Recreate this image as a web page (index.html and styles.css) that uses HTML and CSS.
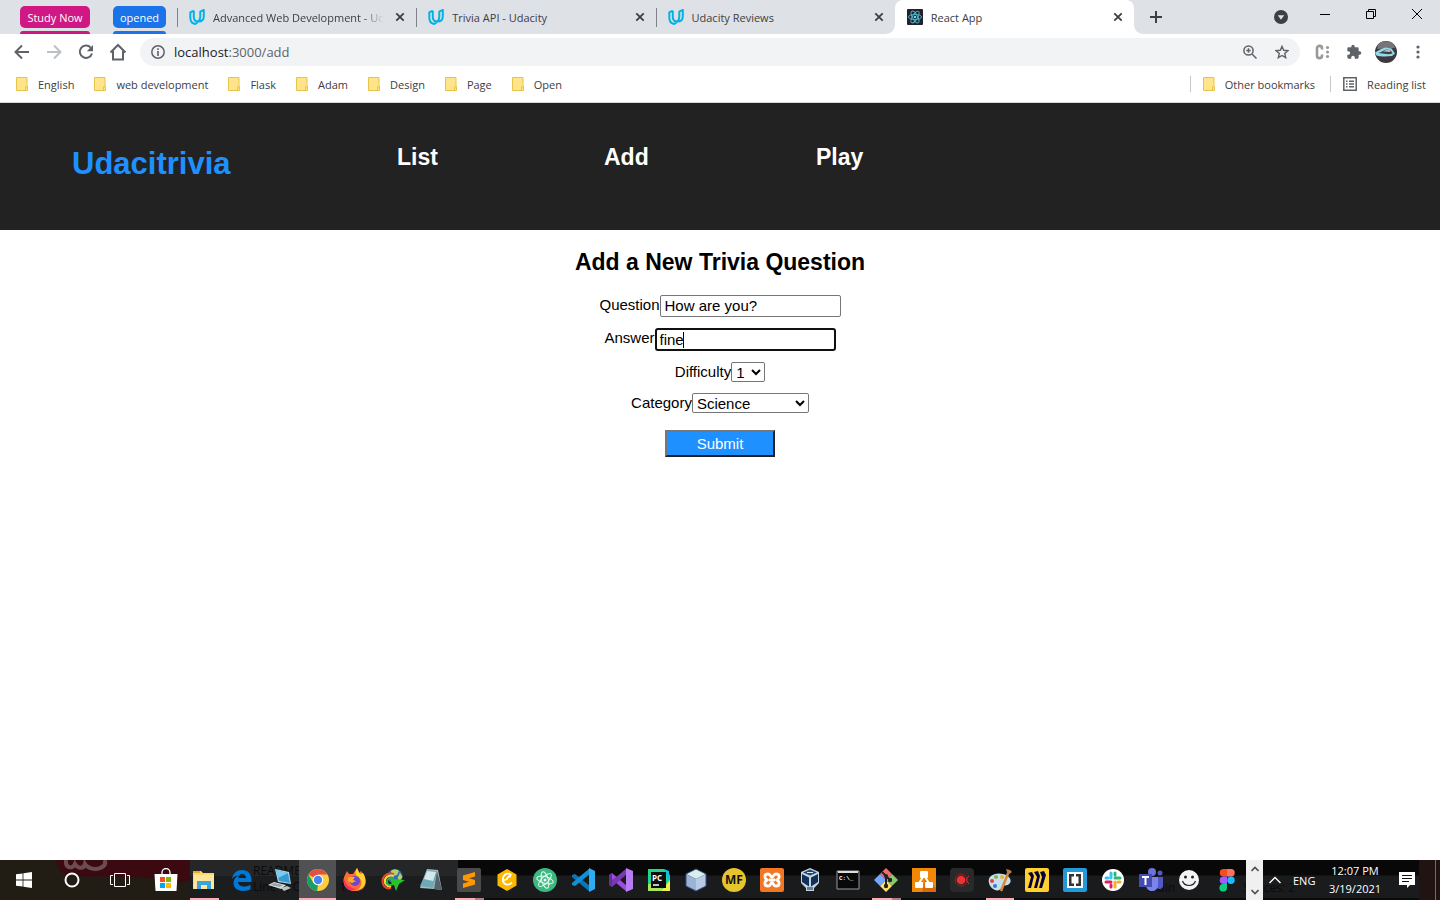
FILE: index.html
```html
<!DOCTYPE html>
<html lang="en">
<head>
<meta charset="utf-8">
<title>React App</title>
<link rel="stylesheet" href="styles.css">
</head>
<body>
<svg class="defs" aria-hidden="true">
  <symbol id="udacity" viewBox="0 0 16 16"><path d="M4.8 1.7 1.3 3.4v5.1c0 3.300 1.900 5.900 4.600 6.500 1.600-.4 2.600-1.400 3.200-2.600M4.800 1.700v6.300c0 2.800 1.800 4.600 4.600 4.600 3.500 0 5.400-2.200 5.400-5.300V.9l-3.500 1.700v5.200c0 1.900-.5 3.300-1.900 4.700" fill="none" stroke="#02b3e4" stroke-width="2" stroke-linejoin="round"/></symbol>
  <symbol id="close" viewBox="0 0 10 10"><path d="M1.300 1.300l7.400 7.400M8.700 1.300L1.300 8.700" stroke="#3c4043" stroke-width="1.800"/></symbol>
  <symbol id="folder" viewBox="0 0 12 14"><path d="M.5.5h10.500v9h.5v4H.5z" fill="#ffe48c" stroke="#e8c44a"/><path d="M9.500 13V9.800H11" fill="none" stroke="#e8c44a"/></symbol>
</svg>

<header class="browser">
  <div class="tabstrip">
    <div class="groups">
      <button class="chip chip-pink">Study Now</button>
      <button class="chip chip-blue">opened</button>
    </div>
    <nav class="tabs" aria-label="Tabs">
      <div class="tab"><svg class="fav"><use href="#udacity"/></svg><span class="tab-title fade">Advanced Web Development - Ud</span><button class="x" aria-label="Close tab"><svg><use href="#close"/></svg></button></div>
      <div class="tab"><svg class="fav"><use href="#udacity"/></svg><span class="tab-title">Trivia API - Udacity</span><button class="x" aria-label="Close tab"><svg><use href="#close"/></svg></button></div>
      <div class="tab"><svg class="fav"><use href="#udacity"/></svg><span class="tab-title">Udacity Reviews</span><button class="x" aria-label="Close tab"><svg><use href="#close"/></svg></button></div>
      <div class="tab active"><svg class="fav" viewBox="0 0 16 16"><rect width="16" height="16" rx="1" fill="#20232a"/><g fill="none" stroke="#50b8d2" stroke-width=".9"><ellipse cx="8" cy="8" rx="6.600" ry="2.600"/><ellipse cx="8" cy="8" rx="6.600" ry="2.600" transform="rotate(60 8 8)"/><ellipse cx="8" cy="8" rx="6.600" ry="2.600" transform="rotate(120 8 8)"/></g><circle cx="8" cy="8" r="1.300" fill="#61dafb"/></svg><span class="tab-title">React App</span><button class="x" aria-label="Close tab"><svg><use href="#close"/></svg></button></div>
    </nav>
    <button class="newtab" aria-label="New tab"><svg width="12" height="12"><path d="M6 0v12M0 6h12" stroke="#3c4043" stroke-width="2"/></svg></button>
    <div class="window-controls">
      <button class="search-tabs" aria-label="Search tabs"><svg width="14" height="14"><circle cx="7" cy="7" r="7" fill="#3c4043"/><path d="M3.800 5.200h6.400L7 9.800z" fill="#dee1e6"/></svg></button>
      <button aria-label="Minimize"><svg width="10" height="10"><path d="M0 5.500h10" stroke="#000"/></svg></button>
      <button aria-label="Restore"><svg width="10" height="10" fill="none" stroke="#000"><path d="M.5 2.500h7v7h-7zM2.500 2.500v-2h7v7h-2"/></svg></button>
      <button aria-label="Close"><svg width="10" height="10"><path d="M0 0l10 10M10 0L0 10" stroke="#000"/></svg></button>
    </div>
  </div>

  <div class="toolbar">
    <button class="tool" aria-label="Back"><svg width="16" height="16" fill="none" stroke="#5f6368" stroke-width="2"><path d="M15 8H2M8 1.500L1.500 8 8 14.500"/></svg></button>
    <button class="tool" aria-label="Forward"><svg width="16" height="16" fill="none" stroke="#bdc0c3" stroke-width="2"><path d="M1 8h13M8 1.500L14.500 8 8 14.500"/></svg></button>
    <button class="tool" aria-label="Reload"><svg width="16" height="16"><path d="M12.700 3.600A6.200 6.200 0 1 0 14 9.500" fill="none" stroke="#5f6368" stroke-width="2"/><path d="M15 1v6.200H8.800z" fill="#5f6368"/></svg></button>
    <button class="tool" aria-label="Home"><svg width="18" height="18" fill="none" stroke="#5f6368" stroke-width="2"><path d="M1.500 9.500L9 2l7.500 7.500M4 8v8.500h10V8"/></svg></button>
    <div class="omnibox">
      <svg width="14" height="14"><circle cx="7" cy="7" r="6.200" fill="none" stroke="#5f6368" stroke-width="1.500"/><path d="M7 6v5M7 3.300v1.600" stroke="#5f6368" stroke-width="1.600"/></svg>
      <div class="url">localhost<span>:3000/add</span></div>
      <button class="tool" aria-label="Zoom"><svg width="14" height="14" fill="none" stroke="#5f6368" stroke-width="1.500"><circle cx="5.500" cy="5.500" r="4.600"/><path d="M9 9l4.500 4.500M3.300 5.500h4.400M5.500 3.300v4.400"/></svg></button>
      <button class="tool" aria-label="Bookmark"><svg width="14" height="14" viewBox="0 0 14 14"><path d="M7 1.400l1.700 3.900 4.200.4-3.200 2.800 1 4.200L7 10.500l-3.700 2.200 1-4.200L1.100 5.700l4.200-.4z" fill="none" stroke="#5f6368" stroke-width="1.400"/></svg></button>
    </div>
    <div class="extensions">
      <button class="tool" aria-label="Extension"><svg width="16" height="16"><path d="M8 5.500V4C8 1.200 3 1.200 3 4v8c0 2.800 5 2.800 5 0v-1.500" fill="none" stroke="#999" stroke-width="2.600"/><g fill="#999"><circle cx="13.500" cy="3.500" r="1.600"/><circle cx="13.500" cy="8" r="1.600"/><circle cx="13.500" cy="12.500" r="1.600"/></g></svg></button>
      <button class="tool" aria-label="Extensions"><svg width="16" height="16" viewBox="0 0 24 24"><path fill="#5f6368" d="M20.500 11H19V7a2 2 0 0 0-2-2h-4V3.500a2.500 2.500 0 0 0-5 0V5H4a2 2 0 0 0-2 2v3.800h1.500a2.700 2.700 0 0 1 0 5.400H2V20c0 1.100.9 2 2 2h3.800v-1.500a2.700 2.700 0 0 1 5.400 0V22H17a2 2 0 0 0 2-2v-4h1.500a2.500 2.500 0 0 0 0-5z"/></svg></button>
      <button class="tool" aria-label="Profile"><svg width="22" height="22"><circle cx="11" cy="11" r="11" fill="#3d383d"/><path d="M3 3.800A11 11 0 0 1 19 3.800L20 7 2 8z" fill="#77747a"/><path d="M0 11.500c3-1.500 6-4 10.500-5l6 1 3.500 5-3 2.500c-6 .8-12 .5-15.500-.5z" fill="#8fdcea"/><path d="M3.500 12c3-.5 5-3 8-3.500l4 .5 2 3.500-4 .8z" fill="#403d43"/><path d="M8 10.500l4-2 4 .5-1 2z" fill="#b9bac0"/></svg></button>
      <button class="tool" aria-label="Menu"><svg width="4" height="14" fill="#5f6368"><circle cx="2" cy="2" r="1.600"/><circle cx="2" cy="7" r="1.600"/><circle cx="2" cy="12" r="1.600"/></svg></button>
    </div>
  </div>

  <div class="bookmarks">
    <a href="#"><svg class="folder"><use href="#folder"/></svg>English</a>
    <a href="#"><svg class="folder"><use href="#folder"/></svg>web development</a>
    <a href="#"><svg class="folder"><use href="#folder"/></svg>Flask</a>
    <a href="#"><svg class="folder"><use href="#folder"/></svg>Adam</a>
    <a href="#"><svg class="folder"><use href="#folder"/></svg>Design</a>
    <a href="#"><svg class="folder"><use href="#folder"/></svg>Page</a>
    <a href="#"><svg class="folder"><use href="#folder"/></svg>Open</a>
    <div class="bookmarks-end">
      <a href="#"><svg class="folder"><use href="#folder"/></svg>Other bookmarks</a>
      <a href="#"><svg width="14" height="14"><path d="M.8.8h12.400v12.400H.8z" fill="none" stroke="#5f6368" stroke-width="1.500"/><path d="M3 4.200h1.500M6 4.200h5M3 7h1.500M6 7h5M3 9.800h1.500M6 9.800h5" stroke="#5f6368" stroke-width="1.400"/></svg>Reading list</a>
    </div>
  </div>
</header>

<div class="app-header">
  <h1>Udacitrivia</h1>
  <h2 class="nav-list">List</h2>
  <h2 class="nav-add">Add</h2>
  <h2>Play</h2>
</div>

<main class="page">
  <h2>Add a New Trivia Question</h2>
  <form class="form">
    <label>Question<input class="field" type="text" value="How are you?"></label>
    <label>Answer<span class="focused"><input class="field" type="text" value="fine"><i class="caret"></i></span></label>
    <label>Difficulty<select class="short"><option>1</option><option>2</option><option>3</option><option>4</option><option>5</option></select></label>
    <label>Category<select class="wide"><option>Science</option><option>Art</option><option>Geography</option><option>History</option><option>Entertainment</option><option>Sports</option></select></label>
    <button class="submit" type="submit">Submit</button>
  </form>
</main>

<footer class="taskbar">
  <div class="backdrop" aria-hidden="true">
    <svg class="ribbon" width="134" height="40"><path d="M0 0c1 10 6 15 16 16 34 2 70-1 90 4 10 2 18 4 28 0V0z" fill="#3b0a10"/><path d="M10 0c-1 9 7 9 9 4 3 5 9 5 10 0 3 5 11 6 15 4 6-2 6-6 4-8" fill="none" stroke="#6b4d4f" stroke-width="4"/></svg>
    <div class="editor"><span>README.md</span><span>Line 1, Column 1</span></div>
    <div class="status"><span>main</span><span>Spaces: 2</span></div>
    <div class="edge"></div>
  </div>
  <div class="system">
    <button aria-label="Start"><svg width="16" height="16" fill="#fff"><path d="M0 2.300l6.600-.9v6.200H0zM7.400 1.300L16 0v7.600H7.400zM0 8.400h6.600v6.200L0 13.700zM7.400 8.400H16V16l-8.600-1.300z"/></svg></button>
    <button aria-label="Search"><svg width="16" height="16"><circle cx="8" cy="8" r="6.500" fill="none" stroke="#fff" stroke-width="2"/></svg></button>
    <button aria-label="Task view"><svg width="20" height="14" fill="none" stroke="#fff"><path d="M4.500.5h11v13h-11zM3 2.500H.5v9H3M17 2.500h2.500v9H17"/></svg></button>
  </div>
  <div class="apps">
    <button aria-label="Store"><svg viewBox="0 0 24 24"><path d="M8 6V4.500a4 4 0 0 1 8 0V6" fill="none" stroke="#fff" stroke-width="1.300"/><path d="M.5 6h23l-1 17h-21z" fill="#fff"/><path fill="#f25022" d="M6 9h5v5H6z"/><path fill="#7fba00" d="M12 9h5v5h-5z"/><path fill="#00a4ef" d="M6 15h5v5H6z"/><path fill="#ffb900" d="M12 15h5v5h-5z"/></svg></button>
    <button class="running" aria-label="File Explorer"><svg viewBox="0 0 24 24"><path d="M1 3h8l2 2h11v16H1z" fill="#ffd86b"/><path d="M1 3h7v2H1z" fill="#e8a928"/><path d="M2 7h20v14H2z" fill="#ffe69b"/><path d="M5 21v-8h14v8h-4v-4H9v4z" fill="#38a3dc"/></svg></button>
    <button aria-label="Edge"><svg viewBox="0 0 24 24"><path d="M2 11C3 5 7 2 12 2c6 0 9.500 4 9.500 10v2H8c.3 3 3 4.500 6 4.500 2.500 0 5-.8 6.500-1.800v4.500c-2 1.100-4.500 1.700-7.500 1.700C7 22.900 3.500 19.500 3.500 15c0-3.500 2-6.300 5-7.500C5.500 7.500 3.500 9 2 11zm6.200-1H16c0-2.500-1.500-4-3.800-4S8.500 7.700 8.200 10z" fill="#0078d7"/></svg></button>
    <button aria-label="This PC"><svg viewBox="0 0 24 24"><path d="M7 1l14 3 2 12-13-2z" fill="#b9d9e5"/><path d="M8 2l12 3 2 10-11-2z" fill="#359bd6"/><path d="M8 2l12 3-10 5z" fill="#79cdf0"/><path d="M0 17l6-3 12 3-5 4z" fill="#d9dee2"/><path d="M2 17l4-2 9 2-3 2z" fill="#9aa3a9"/><path d="M13 20l6-2 4 2-7 3z" fill="#bac4ca"/></svg></button>
    <button class="running current" aria-label="Chrome"><svg viewBox="0 0 24 24"><circle cx="12" cy="12" r="11" fill="#ffcd40"/><path d="M12 12L2.500 6.500A11 11 0 0 1 21.500 6.500H12z" fill="#de5246"/><path d="M2.500 6.500L7.500 15 12 17l-1 6A11 11 0 0 1 2.500 6.500z" fill="#1a9f60"/><circle cx="12" cy="12" r="5.300" fill="#fff"/><circle cx="12" cy="12" r="4.200" fill="#4285f4"/></svg></button>
    <button aria-label="Firefox"><svg viewBox="0 0 24 24"><path d="M4 3l2 3 4 0 4-6 2 5 2-2 3 4c4 8 1 16-9 16S-2 14 2 7z" fill="#ff6b35"/><path d="M14 0l3 6 3-1c5 8 2 16-6 17 6-4 6-11 0-14-2-2-2-5 0-8z" fill="#ffd52e"/><path d="M1 11c2 6 5 9 12 10-6 4-13-1-12-10z" fill="#ff286a"/><circle cx="12" cy="13" r="5" fill="#7046cf"/><path d="M5 9h7l-2 3 3 1-4 2-4-2z" fill="#ffae24"/></svg></button>
    <button aria-label="Download Manager"><svg viewBox="0 0 24 24"><circle cx="14" cy="8.500" r="7.500" fill="#2f6fb8"/><path d="M10 3c2-2 6-2 8 0l-2 4-5 1zM19 5l2.500 4-3 4-2-3z" fill="#b7cf6a"/><path d="M13 6C5 4 0 9 2 16c1 4 5 5 8 4" fill="none" stroke="#e9442e" stroke-width="2"/><path d="M13 8C7 6 3 10 4 15c1 3 4 4 6 3" fill="none" stroke="#ffd83d" stroke-width="2"/><path d="M13 10c-4-1-7 1-7 4 0 2 2 3 4 3" fill="none" stroke="#2bb34a" stroke-width="2"/><path d="M9 11l15 1-6 4-3 7-2-6-5 1 3-3z" fill="#28c22c"/></svg></button>
    <button aria-label="Notepad"><svg viewBox="0 0 24 24"><path d="M8 1l11 1 4 20-8-1-14-1z" fill="#a8bcc4"/><path d="M8 2l10 1-4 17L1 18z" fill="#6fa9b8"/><path d="M8 3l9 1-3 9-9-2z" fill="#d4e9ec"/><path d="M18 3l5 19-8-1z" fill="#54646b"/></svg></button>
    <button class="running many" aria-label="Sublime Text"><svg viewBox="0 0 24 24"><rect width="24" height="24" rx="2" fill="#4b4b4b"/><path d="M6 7.500l12-3.500v4.500l-6 1.800 6 1.700v4.500L6 20v-4.500l6-1.700-6-1.800z" fill="#ff9800"/></svg></button>
    <button aria-label="Git client"><svg viewBox="0 0 24 24"><path d="M12 1l9.500 5.500v11L12 23l-9.500-5.500v-11z" fill="#ffb800"/><path d="M16.500 7c-5-3.500-9.500.5-8.500 6 1 4 6 5 9 1.500M16 8c-3 0-4 2-4.500 4M7 11l4 1" fill="none" stroke="#fff" stroke-width="1.800"/></svg></button>
    <button aria-label="Atom"><svg viewBox="0 0 24 24"><circle cx="12" cy="12" r="12" fill="#3cb880"/><g fill="none" stroke="#e5fff2"><ellipse cx="12" cy="12" rx="8.500" ry="3.300" transform="rotate(15 12 12)"/><ellipse cx="12" cy="12" rx="8.500" ry="3.300" transform="rotate(75 12 12)"/><ellipse cx="12" cy="12" rx="8.500" ry="3.300" transform="rotate(135 12 12)"/></g><circle cx="12" cy="12" r="1.500" fill="#fff"/></svg></button>
    <button aria-label="Visual Studio Code"><svg viewBox="0 0 24 24"><path d="M1 7l3-1 15 12v6L1 9z" fill="#0876b9"/><path d="M1 17l3 1L19 6V0L1 15z" fill="#158fd4"/><path d="M18 0l6 3v18l-6 3z" fill="#30adef"/></svg></button>
    <button aria-label="Visual Studio"><svg viewBox="0 0 24 24"><path d="M0 7l3-2 15 13v6L0 9z" fill="#9b4de0"/><path d="M0 17l3 2L18 6V0L0 15z" fill="#7738b2"/><path d="M0 7l3-2v14l-3-2z" fill="#60309d"/><path d="M17 0l7 3v18l-7 3z" fill="#b77df2"/></svg></button>
    <button aria-label="PyCharm"><svg viewBox="0 0 24 24"><path d="M1 1h16l6 6v15H1z" fill="#20d68b"/><path d="M17 1l5 2v10z" fill="#10bee5"/><path d="M14 23l9-11v11z" fill="#f5ed4a"/><path d="M1 23v-7h14v7z" fill="#abe35a"/><path d="M4 4h15v16H4z" fill="#0d0d0d"/><text x="5" y="13" class="glyph-pc">PC</text><path d="M6 17h6" stroke="#fff" stroke-width="1.500"/></svg></button>
    <button aria-label="Cube"><svg viewBox="0 0 24 24"><path d="M12 1l10 5-10 5L2 6z" fill="#d8edf0"/><path d="M2 6l10 5v12L2 18z" fill="#9ab3d6"/><path d="M22 6l-10 5v12l10-5z" fill="#b8cae6"/><path d="M12 1l10 5v12l-10 5-10-5V6z" fill="none" stroke="#35517d"/></svg></button>
    <button aria-label="MF"><svg viewBox="0 0 24 24"><circle cx="12" cy="12" r="12" fill="#e5c42e"/><text x="12" y="16" text-anchor="middle" class="glyph-mf">MF</text></svg></button>
    <button aria-label="XAMPP"><svg viewBox="0 0 24 24"><rect width="24" height="24" rx="2" fill="#f37623"/><path d="M8 6c3 0 2 3 4 3s1-3 4-3c4 0 4 4 1 6 3 2 3 6-1 6-3 0-2-3-4-3s-1 3-4 3c-4 0-4-4-1-6-3-2-3-6 1-6zM9 12h6" fill="none" stroke="#fff" stroke-width="2.800"/></svg></button>
    <button aria-label="VirtualBox"><svg viewBox="0 0 24 24"><path d="M3 4l9-4 9 4v11l-5 5v3H8v-3l-5-5z" fill="#c5d5e0"/><path d="M5 4.500L12 1.500l7 3-7 3z" fill="#1d4673"/><path d="M4 6l7 3.500v9L4 14zM20 6l-7 3.500v9l7-4.500z" fill="#102f59"/><path d="M9 4.500h6" stroke="#dce9ef"/><path d="M9 19h6v3H9z" fill="#5f7f9a"/></svg></button>
    <button aria-label="Command Prompt"><svg viewBox="0 0 24 24"><path d="M1 3h22v18H1z" fill="#080808" stroke="#9b9b9b"/><path d="M2 3h20v2H2z" fill="#ddd"/><text x="3" y="12" class="glyph-cmd">C:\_</text></svg></button>
    <button class="running many" aria-label="Git"><svg viewBox="0 0 24 24"><path d="M12 0l6 6-6 6-6-6z" fill="#f36b70"/><path d="M6 6l6 6-6 6-6-6z" fill="#72a8ff"/><path d="M18 6l6 6-6 6-6-6z" fill="#87ca68"/><path d="M12 12l6 6-6 6-6-6z" fill="#ffe267"/><path d="M8 4l8 8M12 8v11" stroke="#222" stroke-width="2"/><g fill="#222"><circle cx="12" cy="8" r="2"/><circle cx="16" cy="12" r="2.200"/><circle cx="12" cy="18" r="2.200"/></g></svg></button>
    <button aria-label="draw.io"><svg viewBox="0 0 24 24"><path d="M0 0h24v24H0z" fill="#f08705"/><path d="M14 10l10 10v4H10z" fill="#d76b08"/><path d="M12 7l-6 10M12 7l6 10" stroke="#fff" stroke-width="2"/><g fill="#fff"><rect x="8" y="3" width="8" height="7" rx="1"/><rect x="3" y="14" width="8" height="6" rx="1"/><rect x="13" y="14" width="8" height="6" rx="1"/></g></svg></button>
    <button aria-label="Recorder"><svg viewBox="0 0 24 24"><rect width="24" height="24" rx="4" fill="#292929"/><circle cx="11" cy="12" r="4.300" fill="#ef3034"/><circle cx="11" cy="12" r="6" fill="none" stroke="#a01924"/><path d="M19 8c-3 2-3 5 0 8" fill="none" stroke="#e52d33"/></svg></button>
    <button class="running" aria-label="Paint"><svg viewBox="0 0 24 24"><path d="M1 15C-1 8 7 4 15 6c6 1 9 6 7 9-3 4-7 1-8 4-3 7-12 2-13-4z" fill="#c8e0eb"/><g><circle cx="4" cy="13" r="2" fill="#df4148"/><circle cx="8" cy="9" r="2" fill="#77b957"/><circle cx="14" cy="9" r="2" fill="#eab134"/><circle cx="7" cy="18" r="2" fill="#3a77cd"/></g><path d="M21 3L13 23" stroke="#da8833" stroke-width="2.500"/><path d="M18 1l4 1 2 2-4 3z" fill="#b97e4b"/></svg></button>
    <button aria-label="Miro"><svg viewBox="0 0 24 24"><rect width="24" height="24" rx="2" fill="#ffd02f"/><path d="M3 5l4-1 2 4-3 12H3l3-11zM9 4l4-1 2 5-3 12H9l3-11zM15 4l4-1 2 4-4 13h-3l3-11z" fill="#050038"/></svg></button>
    <button aria-label="Brackets"><svg viewBox="0 0 24 24"><rect width="24" height="24" rx="2" fill="#2299d9"/><path d="M4 4h16v16H4z" fill="#fff"/><path d="M11 6H6v12h5v-2.500H8.500v-7H11zM13 6h5v12h-5v-2.500h2.500v-7H13z" fill="#333"/></svg></button>
    <button aria-label="Slack"><svg viewBox="0 0 24 24"><circle cx="12" cy="12" r="11" fill="#fff"/><g stroke-width="3" stroke-linecap="round"><path d="M10 5v5M5 10h2" stroke="#36c5f0"/><path d="M14 10h5M14 5v2" stroke="#2eb67d"/><path d="M14 14v5M17 14h2" stroke="#ecb22e"/><path d="M5 14h5M10 17v2" stroke="#e01e5a"/></g></svg></button>
    <button aria-label="Teams"><svg viewBox="0 0 24 24"><circle cx="13" cy="4" r="4" fill="#6c73d8"/><circle cx="21" cy="5" r="2.500" fill="#5059c9"/><path d="M17 9h7v9c0 3-4 4-6 2z" fill="#5059c9"/><path d="M7 9h12v8c0 8-12 8-12 0z" fill="#7b83eb"/><path d="M0 6h13v13H0z" fill="#444bb3"/><path d="M3 9h7M6.500 9v8" stroke="#fff" stroke-width="2"/></svg></button>
    <button aria-label="Smiley"><svg viewBox="0 0 24 24"><circle cx="12" cy="12" r="10" fill="#f4f4f4"/><circle cx="8.500" cy="9" r="1.500" fill="#222"/><circle cx="15.500" cy="9" r="1.500" fill="#222"/><path d="M5.500 13c2 6 11 6 13 0" fill="none" stroke="#222" stroke-width="1.200"/></svg></button>
    <button aria-label="Figma"><svg viewBox="0 0 24 24"><path d="M12 1v7.500H8.500a3.700 3.700 0 0 1 0-7.500z" fill="#f24e1e"/><path d="M12 1h4a3.700 3.700 0 0 1 0 7.500h-4z" fill="#ff7262"/><path d="M12 8.500V16H8.500a3.700 3.700 0 0 1 0-7.500z" fill="#a259ff"/><circle cx="16" cy="12.200" r="3.700" fill="#1abcfe"/><path d="M8.500 16H12v4A3.800 3.800 0 1 1 8.500 16z" fill="#0acf83"/></svg></button>
  </div>
  <div class="scroller">
    <button aria-label="Scroll up"><svg width="8" height="6"><path d="M.5 5L4 1.500 7.500 5" fill="none" stroke="#505050" stroke-width="1.600"/></svg></button>
    <button aria-label="Scroll down"><svg width="8" height="6"><path d="M.5 1L4 4.500 7.500 1" fill="none" stroke="#505050" stroke-width="1.600"/></svg></button>
  </div>
  <div class="tray">
    <button aria-label="Show hidden icons"><svg width="12" height="8"><path d="M.5 7L6 1.500 11.500 7" fill="none" stroke="#fff" stroke-width="1.300"/></svg></button>
    <span class="lang">ENG</span>
    <div class="clock"><span>12:07 PM</span><span>3/19/2021</span></div>
    <button aria-label="Notifications"><svg width="16" height="16"><path d="M0 0h16v13h-5l-3 3v-3H0z" fill="#fff"/><path d="M3 3.500h10M3 6.500h10M3 9.500h7" stroke="#111"/></svg></button>
    <div class="show-desktop"></div>
  </div>
</footer>
</body>
</html>
```

FILE: styles.css
```css
* { box-sizing: border-box; }
body {
  margin: 0;
  min-height: 100vh;
  display: flex;
  flex-direction: column;
  background: #fff;
  color: #000;
  font-family: "Liberation Sans", Arial, sans-serif;
  font-size: 15px;
}
h1, h2 { margin: 0; }
svg { display: block; flex: none; }
button { margin: 0; padding: 0; border: 0; background: none; font: inherit; color: inherit; display: flex; align-items: center; justify-content: center; }
.defs { position: absolute; width: 0; height: 0; }

/* Browser chrome */
.browser { font-family: "Open Sans", "Noto Sans", sans-serif; font-size: 11px; color: #3c4043; border-bottom: 1px solid #d5d6d8; }
.tabstrip { display: flex; height: 34px; background: #dee1e6; }
.groups { display: flex; gap: 23px; padding: 6px 11px 0 20px; flex: none; }
.chip { position: relative; height: 22px; border-radius: 5px; color: #fff; }
.chip::after { content: ""; position: absolute; left: 0; right: 0; top: 25px; height: 3px; border-radius: 3px 3px 0 0; background: inherit; }
.chip-pink { width: 70px; background: #d01884; }
.chip-blue { width: 53px; background: #1a73e8; }
.tabs { display: flex; flex: 0 1 957px; min-width: 0; }
.tab { flex: 1 1 0; min-width: 0; display: flex; align-items: center; padding: 0 11px 0 12px; position: relative; }
.tab::before { content: ""; position: absolute; left: 0; top: 8px; width: 1px; height: 19px; background: #808387; }
.tab.active { background: #fff; border-radius: 8px 8px 0 0; }
.tab.active::before { left: -8px; top: auto; bottom: 0; width: 8px; height: 8px; background: radial-gradient(circle at 0 0, transparent 7px, #fff 8px); }
.tab.active::after { content: ""; position: absolute; right: -8px; bottom: 0; width: 8px; height: 8px; background: radial-gradient(circle at 100% 0, transparent 7px, #fff 8px); }
.fav { width: 16px; height: 16px; margin-right: 8px; }
.tab-title { flex: 1; min-width: 0; white-space: nowrap; overflow: hidden; }
.fade { -webkit-mask-image: linear-gradient(90deg, #000 86%, transparent 98%); mask-image: linear-gradient(90deg, #000 86%, transparent 98%); }
.x { width: 10px; height: 10px; margin-left: 8px; }
.x svg { width: 10px; height: 10px; }
.newtab { width: 44px; flex: none; }
.window-controls { display: flex; margin-left: auto; }
.window-controls button { width: 46px; height: 28px; }
.window-controls .search-tabs { width: 42px; height: 34px; }
.toolbar { display: flex; align-items: center; padding: 4px 6px 4px 6px; height: 36px; }
.tool { width: 32px; height: 28px; flex: none; }
.omnibox { flex: 1; height: 28px; display: flex; align-items: center; margin-left: 6px; padding: 0 2px 0 11px; border-radius: 14px; background: #f1f3f4; }
.url { flex: 1; margin-left: 9px; font-size: 13px; color: #202124; }
.url span { color: #5f6368; }
.extensions { display: flex; padding-left: 6px; }
.bookmarks { display: flex; align-items: center; gap: 20px; height: 32px; padding: 0 14px 4px 16px; }
.bookmarks a { display: flex; align-items: center; gap: 10px; color: #3c4043; text-decoration: none; white-space: nowrap; }
.folder { width: 12px; height: 14px; }
.bookmarks-end { display: flex; gap: 15px; margin-left: auto; }
.bookmarks-end a { border-left: 1px solid #c4c7ca; padding-left: 12px; height: 16px; }

/* Trivia application */
.app-header { display: flex; align-items: flex-start; height: 127px; padding: 40px 72px 0; background: #222; color: #fff; }
.app-header h1 { width: 325px; font-size: 31px; line-height: 42px; color: #1e90ff; }
.app-header h2, .page h2 { font-size: 23px; line-height: 28px; }
.nav-list { width: 207px; }
.nav-add { width: 212px; }
.page { flex: 1; padding-top: 18px; text-align: center; }
.form { display: flex; flex-direction: column; align-items: center; gap: 11px; margin-top: 19px; }
.form label { display: flex; align-items: flex-start; line-height: 20px; }
.field { width: 181px; height: 22px; padding: 0 4px 1px; border: 1px solid #767676; border-radius: 2px; font: inherit; color: #000; background: #fff; outline: 0; }
.focused { position: relative; display: flex; }
.focused .field { height: 23px; border: 2px solid #101010; border-radius: 3px; padding: 0 3px; }
.caret { position: absolute; left: 28px; top: 4px; width: 1px; height: 16px; background: #000; }
.form select { height: 20px; padding: 0; border: 1px solid #767676; border-radius: 2px; background: #fff; color: #000; font: inherit; }
.short { width: 34px; }
.wide { width: 117px; }
.submit { width: 110px; height: 27px; margin-top: 6px; border: 2px outset #767676; background: #1e90ff; color: #fff; }

/* Windows taskbar */
.taskbar { position: relative; display: flex; height: 40px; overflow: hidden; background: linear-gradient(#080808 0 15px, #191b1d 16px 38px, #0b0b0b 38px); color: #fff; font-family: "Open Sans", "Noto Sans", sans-serif; font-size: 11px; }
.backdrop { position: absolute; inset: 0; display: flex; color: #0b0b0b; font-size: 12px; background: linear-gradient(90deg, #211d14 190px, transparent 190px); }
.ribbon { position: absolute; left: 56px; top: 0; }
.editor { display: flex; flex-direction: column; width: 268px; margin-left: 190px; padding: 3px 0 0 63px; line-height: 16px; background: linear-gradient(#252627 16px, #1b1d1f 16px); }
.status { display: flex; align-items: flex-end; gap: 68px; margin-left: auto; padding: 0 124px 4px 0; }
.edge { width: 21px; background: #211311; }
.system, .apps, .tray { position: relative; display: flex; }
.system button { width: 48px; }
.apps { flex: 1; min-width: 0; padding-left: 3px; }
.apps button { flex: 1 1 0; min-width: 0; position: relative; }
.apps svg { width: 24px; height: 24px; }
.running::after { content: ""; position: absolute; left: 5px; right: 4px; bottom: 0; height: 2px; background: #ffabb2; }
.many::after { background: linear-gradient(90deg, #ffabb2 70%, #b77b82 70%); }
.current { background: #505152; }
.current::after { left: 0; right: 0; }
.scroller { position: relative; display: flex; flex-direction: column; justify-content: space-between; width: 17px; padding: 6px 0 5px; background: #f0f0f0; }
.tray { align-items: center; width: 177px; padding-left: 6px; }
.lang { margin-left: 12px; width: 36px; }
.clock { display: flex; flex-direction: column; width: 52px; margin-right: 18px; text-align: center; line-height: 18px; white-space: nowrap; align-items: center; }
.show-desktop { width: 1px; height: 40px; margin-left: auto; margin-right: 4px; background: #776b68; }
.glyph-pc { font: bold 8px "Open Sans", sans-serif; fill: #fff; }
.glyph-mf { font: bold 12px "Open Sans", sans-serif; fill: #111; }
.glyph-cmd { font: bold 6px "Liberation Mono", monospace; fill: #fff; }
```
